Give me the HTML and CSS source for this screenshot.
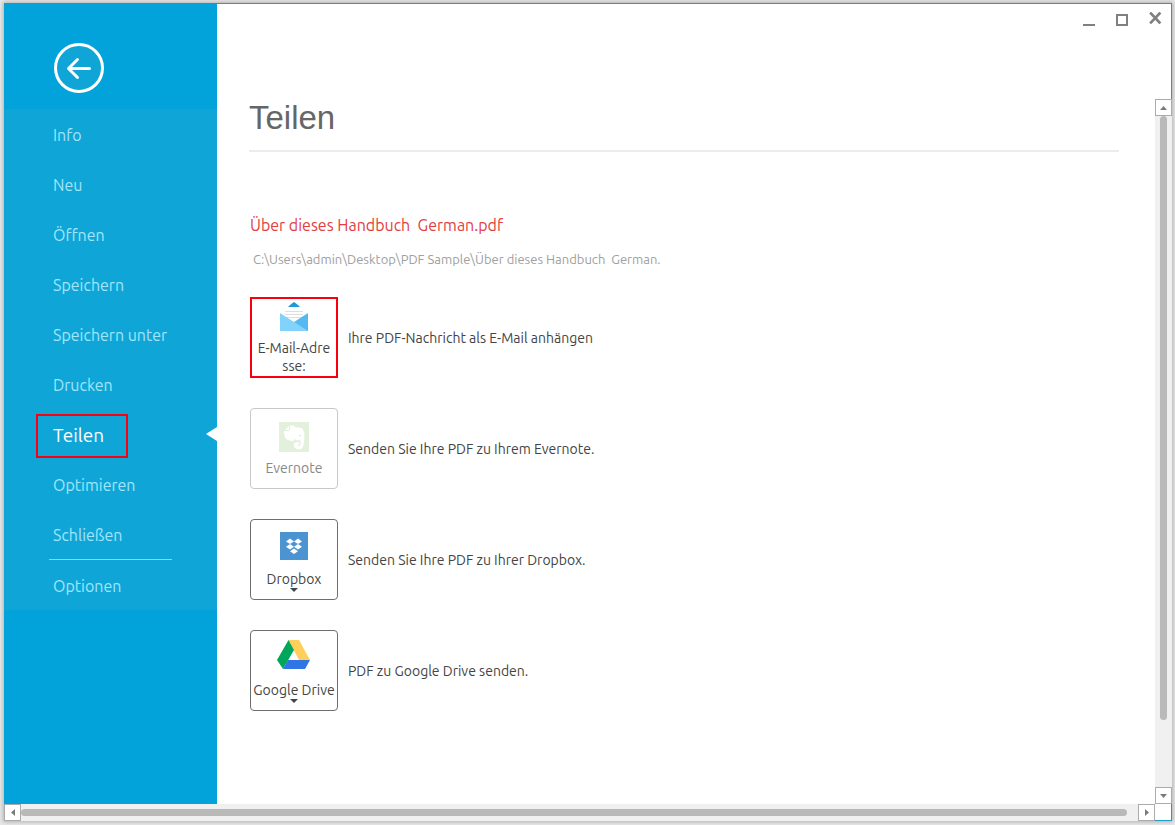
FILE: index.html
```html
<!DOCTYPE html>
<html lang="de">
<head>
<meta charset="utf-8">
<title>Teilen</title>
<link rel="stylesheet" href="styles.css">
</head>
<body>
<div class="window">
  <div class="upper">
    <aside class="sidebar">
      <button class="back" aria-label="Zurück">
        <svg width="50" height="50" viewBox="0 0 50 50" fill="none" stroke="#fff">
          <circle cx="25" cy="25" r="23.5" fill="#0fa5d7" stroke-width="3"/>
          <path d="M35.500 25.500H15M23.500 16.500L14.500 25.500L23.500 34.500" stroke-width="3" stroke-linecap="round" stroke-linejoin="round"/>
        </svg>
      </button>
      <nav class="menu">
        <a class="item" href="#">Info</a>
        <a class="item" href="#">Neu</a>
        <a class="item" href="#">Öffnen</a>
        <a class="item" href="#">Speichern</a>
        <a class="item" href="#">Speichern unter</a>
        <a class="item" href="#">Drucken</a>
        <a class="item active" href="#">Teilen</a>
        <a class="item" href="#">Optimieren</a>
        <a class="item" href="#">Schließen</a>
        <div class="separator"></div>
        <a class="item" href="#">Optionen</a>
      </nav>
    </aside>
    <div class="pane">
      <header class="titlebar">
        <button class="control" aria-label="Minimieren"><svg width="13" height="14" viewBox="0 0 13 14"><path d="M0 13h12" stroke="#808080" stroke-width="2"/></svg></button>
        <button class="control" aria-label="Maximieren"><svg width="13" height="14" viewBox="0 0 13 14"><path d="M1 3h10v10H1z" fill="none" stroke="#808080" stroke-width="2"/></svg></button>
        <button class="control" aria-label="Fenster schließen"><svg width="13" height="14" viewBox="0 0 13 14"><path d="M2 1.500l8.500 9M10.500 1.500l-8.500 9" stroke="#808080" stroke-width="2.600" stroke-linecap="square"/></svg></button>
      </header>
      <div class="body">
        <main class="content">
          <h1 class="heading">Teilen</h1>
          <h2 class="filename">Über dieses Handbuch&nbsp; German.pdf</h2>
          <p class="path">C:\Users\admin\Desktop\PDF Sample\Über dieses Handbuch&nbsp; German.</p>
          <div class="targets">
            <div class="target">
              <button class="tile selected" aria-describedby="d1">
                <svg width="30" height="30" viewBox="0 0 30 30">
                  <path d="M15 0C17 1 19 3 21 5H9C11 3 13 1 15 0z" fill="#1d9ad9"/>
                  <path d="M6 9.500h18M6 12.500h18M6 15.500h18" stroke="#dedede"/>
                  <path d="M29 11v18H1L15 20z" fill="#55b9f0"/>
                  <path d="M1 11L29 29H1z" fill="#82d3fc"/>
                </svg>
                <span>E-Mail-Adre<br>sse:</span>
              </button>
              <span class="desc" id="d1">Ihre PDF-Nachricht als E-Mail anhängen</span>
            </div>
            <div class="target">
              <button class="tile disabled" aria-describedby="d2" disabled>
                <svg width="30" height="30" viewBox="0 0 30 30">
                  <path d="M0 0h30v30H0z" fill="#e2f0dc"/>
                  <path d="M11 4C12 3 15 3 16 5L22 6C24 6 24 8 25 10C26 15 25 22 24 25C23 28 18 28 16 26C14 23 15 20 18 20C20 20 21 21 20 23C18 22 18 24 20 24C22 24 22 20 21 18C19 19 17 18 16 17C15 20 12 19 9 18C6 17 5 13 5 9H9Q11 9 11 7z" fill="#fff"/>
                  <path d="M10 4v4H6z" fill="#fff"/><path d="M19.500 14q1.500-2 3 .5q-1.500-.5-3-.5z" fill="#d5e8cd"/>
                </svg>
                <span>Evernote</span>
              </button>
              <span class="desc" id="d2">Senden Sie Ihre PDF zu Ihrem Evernote.</span>
            </div>
            <div class="target">
              <button class="tile" aria-describedby="d3">
                <svg width="30" height="30" viewBox="0 0 30 30">
                  <path d="M1 1h28v28H1z" fill="#4b94d1"/>
                  <path d="M11 7.500l4 3-4 2.500-4-2.500zM19 7.500l4 3-4 2.500-4-2.500zM11 13l4 2.700-4 2.800-4-2.800zM19 13l4 2.700-4 2.800-4-2.800zM15 17.500l4 2.800-4 2.700-4-2.700z" fill="#fff"/>
                </svg>
                <span>Dropbox</span>
                <svg class="caret" width="8" height="4" viewBox="0 0 8 4"><path d="M0 0h8L4 4z" fill="#444"/></svg>
              </button>
              <span class="desc" id="d3">Senden Sie Ihre PDF zu Ihrer Dropbox.</span>
            </div>
            <div class="target">
              <button class="tile drive" aria-describedby="d4">
                <svg width="34" height="30" viewBox="0 0 34 30">
                  <path d="M11.500 0h10.500L33 20H22z" fill="#ffcf5c"/>
                  <path d="M11.500 0L17 10 6 29 0 20z" fill="#00a65a"/>
                  <path d="M11 20h22l-5 9H6z" fill="#2f75e6"/>
                </svg>
                <span>Google Drive</span>
                <svg class="caret" width="8" height="4" viewBox="0 0 8 4"><path d="M0 0h8L4 4z" fill="#444"/></svg>
              </button>
              <span class="desc" id="d4">PDF zu Google Drive senden.</span>
            </div>
          </div>
        </main>
        <div class="vscroll">
          <button class="arrow" aria-label="Nach oben"><svg width="7" height="4" viewBox="0 0 7 4"><path d="M0 4h7L3.500 0z"/></svg></button>
          <div class="vtrack"><div class="vthumb"></div></div>
          <button class="arrow" aria-label="Nach unten"><svg width="7" height="4" viewBox="0 0 7 4"><path d="M0 0h7L3.500 4z"/></svg></button>
        </div>
      </div>
    </div>
  </div>
  <div class="hscroll">
    <button class="arrow" aria-label="Nach links"><svg width="4" height="7" viewBox="0 0 4 7"><path d="M4 0v7L0 3.500z"/></svg></button>
    <div class="htrack"><div class="hthumb"></div></div>
    <button class="arrow" aria-label="Nach rechts"><svg width="4" height="7" viewBox="0 0 4 7"><path d="M0 0v7L4 3.500z"/></svg></button>
    <div class="corner"></div>
  </div>
</div>
</body>
</html>
```
FILE: styles.css
```css
*, *::before, *::after { box-sizing: border-box; }
html, body { height: 100%; margin: 0; }
body {
  display: flex;
  padding: 3px 3px 4px 4px;
  background: #e8e8e8;
  font-family: Ubuntu, "Noto Sans", sans-serif;
  font-size: 14px;
  color: #444;
}
button {
  margin: 0;
  padding: 0;
  border: 0;
  background: none;
  font: inherit;
  color: inherit;
}
svg { display: block; flex: none; }
.window {
  flex: 1;
  display: flex;
  flex-direction: column;
  min-width: 0;
  background: #fff;
  box-shadow: 0 0 4px 1px #b0b0b0;
}
.upper { flex: 1; display: flex; min-height: 0; }
.sidebar { width: 213px; flex: none; background: #02a2db; }
.back { display: block; margin: 40px 0 16px 50px; border-radius: 50%; }
.menu { background: #0fa5d7; }
.item {
  position: relative;
  display: flex;
  align-items: center;
  height: 50px;
  padding: 2px 0 0 49px;
  font-size: 16px;
  color: #a0e6fb;
  text-decoration: none;
}
.active { font-size: 19px; color: #fff; }
.active::before {
  content: "";
  position: absolute;
  left: 32px;
  top: 5px;
  width: 92px;
  height: 44px;
  border: 2px solid #fa000f;
}
.active::after {
  content: "";
  position: absolute;
  right: 0;
  top: 18px;
  border: solid transparent;
  border-width: 7px 11px 7px 0;
  border-right-color: #fff;
}
.separator { width: 123px; height: 1px; margin-left: 45px; background: #7fdcf9; }
.pane { flex: 1; min-width: 0; display: flex; flex-direction: column; }
.titlebar {
  display: flex;
  justify-content: flex-end;
  gap: 20px;
  height: 96px;
  flex: none;
  padding: 8px 9px 0 0;
  border: solid #1a9fcb;
  border-width: 1px 1px 0 0;
}
.control { height: 14px; }
.body { flex: 1; display: flex; min-height: 0; }
.content { flex: 1; min-width: 0; overflow: hidden; padding: 0 36px 0 32px; }
.heading {
  margin: 0;
  padding-bottom: 13px;
  border-bottom: 2px solid #ececec;
  font: 33px/38px "Liberation Sans", Arial, sans-serif;
  color: #666;
}
.filename {
  margin: 61px 0 0 1px;
  font-size: 16px;
  font-weight: 400;
  line-height: 24px;
  color: #e2403f;
}
.path { margin: 12px 0 0 4px; font-size: 13px; line-height: 20px; color: #a0a0a0; }
.targets { display: flex; flex-direction: column; gap: 30px; margin: 28px 0 0 1px; }
.target { display: flex; align-items: center; gap: 10px; }
.tile {
  position: relative;
  display: flex;
  flex-direction: column;
  align-items: center;
  justify-content: flex-start;
  gap: 9px;
  width: 88px;
  height: 81px;
  flex: none;
  padding-top: 11px;
  border: 1px solid #6e6e6e;
  border-radius: 4px;
  line-height: 18px;
  white-space: nowrap;
}
.tile.selected { padding-top: 3px; gap: 7px; border: 2px solid #fa000f; border-radius: 0; }
.tile.disabled { padding-top: 13px; gap: 7px; border-color: #c8c8c8; color: #888; }
.tile.drive { padding-top: 9px; gap: 11px; }
.caret { position: absolute; bottom: 7px; left: 39px; }
.desc { line-height: 20px; }
.vscroll { display: flex; flex-direction: column; width: 17px; background: #f0f0f0; }
.arrow {
  display: flex;
  align-items: center;
  justify-content: center;
  width: 17px;
  height: 17px;
  flex: none;
  border: 1px solid #ababab;
  background: #fff;
  fill: #7a7a7a;
}
.vtrack { flex: 1; }
.vthumb { width: 7px; height: 90%; margin: 0 auto; border-radius: 4px; background: #b9b9b9; }
.hscroll { display: flex; height: 17px; flex: none; background: #f0f0f0; }
.htrack { flex: 1; display: flex; align-items: center; }
.hthumb { width: 99%; height: 7px; border-radius: 4px; background: #b9b9b9; }
.corner { width: 17px; background: #fff; border: solid #1a9fcb; border-width: 0 1px 1px 0; }
```
